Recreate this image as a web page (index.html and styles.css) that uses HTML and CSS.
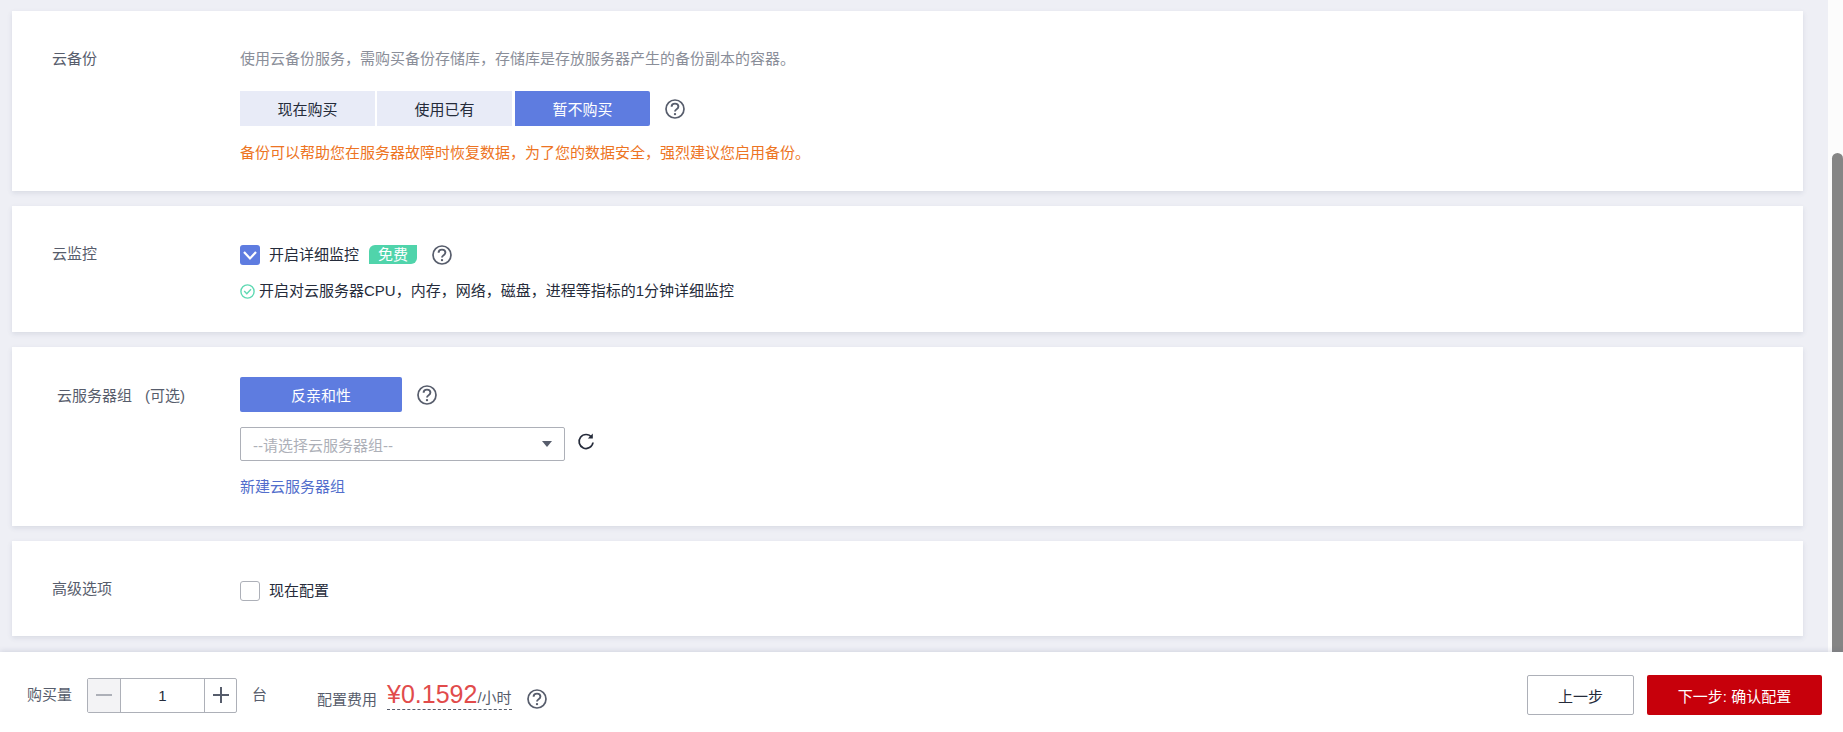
FILE: index.html
```html
<!DOCTYPE html>
<html lang="zh-CN">
<head>
  <meta charset="UTF-8">
  <title>云服务器配置</title>
  <link rel="stylesheet" href="styles.css">
</head>
<body>
  <svg class="defs" width="0" height="0">
    <symbol id="help" viewBox="0 0 20 20">
      <circle cx="10" cy="10" r="9" fill="none" stroke="currentColor" stroke-width="1.7"/>
      <path d="M6.6 7.8c0-2 1.5-3.2 3.4-3.2s3.4 1.2 3.4 3c0 1.3-.8 2-1.8 2.6-1 .6-1.6 1.1-1.6 2.4" fill="none" stroke="currentColor" stroke-width="1.9"/>
      <circle cx="10" cy="15.1" r="1.2" fill="currentColor"/>
    </symbol>
  </svg>

  <div class="viewport">
    <main class="content">
      <section class="card card-backup">
        <div class="label">云备份</div>
        <div class="body">
          <p class="desc">使用云备份服务，需购买备份存储库，存储库是存放服务器产生的备份副本的容器。</p>
          <div class="row tabs-row">
            <div class="tabs">
              <button class="tab">现在购买</button>
              <button class="tab">使用已有</button>
              <button class="tab active">暂不购买</button>
            </div>
            <svg class="help"><use href="#help"/></svg>
          </div>
          <p class="warn">备份可以帮助您在服务器故障时恢复数据，为了您的数据安全，强烈建议您启用备份。</p>
        </div>
      </section>

      <section class="card card-monitor">
        <div class="label">云监控</div>
        <div class="body">
          <div class="row">
            <span class="checkbox checked">
              <svg viewBox="0 0 20 20" width="20" height="20"><path d="M4 7l6 6.5L16 7" fill="none" stroke="#fff" stroke-width="2.2"/></svg>
            </span>
            <span class="check-text">开启详细监控</span>
            <span class="badge">免费</span>
            <svg class="help"><use href="#help"/></svg>
          </div>
          <p class="note">
            <svg class="ok" viewBox="0 0 15 15" width="15" height="15">
              <circle cx="7.5" cy="7.5" r="6.6" fill="none" stroke="#5fd9b3" stroke-width="1.4"/>
              <path d="M4.2 7l2.6 2.8L11 5.2" fill="none" stroke="#5fd9b3" stroke-width="1.4"/>
            </svg>
            开启对云服务器CPU，内存，网络，磁盘，进程等指标的1分钟详细监控
          </p>
        </div>
      </section>

      <section class="card card-group">
        <div class="label">云服务器组<span class="optional">(可选)</span></div>
        <div class="body">
          <div class="row">
            <button class="primary">反亲和性</button>
            <svg class="help"><use href="#help"/></svg>
          </div>
          <div class="row select-row">
            <div class="select">
              <span>--请选择云服务器组--</span>
              <i class="caret"></i>
            </div>
            <svg class="refresh" viewBox="0 0 18 18" width="18" height="18">
              <path d="M14.6 4.2A7 7 0 1 0 16 9.5" fill="none" stroke="#252b3a" stroke-width="1.7"/>
              <path d="M15.8 .6v5h-5z" fill="#252b3a"/>
            </svg>
          </div>
          <a class="link" href="#">新建云服务器组</a>
        </div>
      </section>

      <section class="card card-advanced">
        <div class="label">高级选项</div>
        <div class="body">
          <div class="row">
            <span class="checkbox"></span>
            <span class="check-text">现在配置</span>
          </div>
        </div>
      </section>
    </main>
    <div class="scrollbar"><div class="thumb"></div></div>
  </div>

  <footer class="footer">
    <span class="qty-label">购买量</span>
    <div class="stepper">
      <span class="step minus"><i></i></span>
      <span class="qty">1</span>
      <span class="step plus"><i></i><i class="v"></i></span>
    </div>
    <span class="unit">台</span>
    <span class="fee-label">配置费用</span>
    <span class="price"><b>¥0.1592</b><small>/小时</small></span>
    <svg class="help fee-help"><use href="#help"/></svg>
    <div class="actions">
      <button class="btn-prev">上一步</button>
      <button class="btn-next">下一步: 确认配置</button>
    </div>
  </footer>
</body>
</html>
```

FILE: styles.css
```css
* {
  box-sizing: border-box;
  font-family: "Liberation Sans", "Noto Sans CJK SC", sans-serif;
}

body {
  display: flex;
  flex-direction: column;
  height: 100vh;
  margin: 0;
  overflow: hidden;
  font-size: 15px;
  color: #252b3a;
  background: #fff;
}

p {
  margin: 0;
}

button {
  border: 0;
  padding: 0;
  font-size: 15px;
  cursor: pointer;
}

.defs {
  position: absolute;
}

.viewport {
  display: flex;
  flex: 1;
  min-height: 0;
}

.content {
  flex: 1;
  display: flex;
  flex-direction: column;
  gap: 15px;
  padding: 11px 25px 0 12px;
  background: #eeeff5;
}

.scrollbar {
  display: flex;
  justify-content: flex-end;
  width: 15px;
  padding-top: 153px;
  background: #fcfcfc;
}

.thumb {
  width: 11px;
  background: #858585;
  border-radius: 6px 6px 0 0;
}

.card {
  display: flex;
  padding-left: 40px;
  background: #fff;
  box-shadow: 0 2px 5px rgba(60, 70, 110, .12);
}

.label {
  width: 188px;
  line-height: 20px;
  color: #575d6c;
}

.row {
  display: flex;
  align-items: center;
}

.help {
  width: 20px;
  height: 20px;
  color: #575d6c;
}

.card-backup {
  height: 180px;
  padding-top: 38px;
}

.desc {
  line-height: 20px;
  color: #8a8e99;
}

.tabs-row {
  margin-top: 22px;
}

.tabs {
  display: flex;
  gap: 2px;
  margin-right: 15px;
}

.tab {
  width: 135px;
  height: 35px;
  background: #e8ebf7;
  color: #252b3a;
}

.tab.active {
  margin-left: 1px;
  background: #5e7ce0;
  color: #fff;
  border-radius: 0 2px 2px 0;
}

.warn {
  margin-top: 17px;
  line-height: 20px;
  color: #ed7423;
}

.card-monitor {
  height: 126px;
  padding-top: 38px;
}

.card-monitor .body {
  padding-top: 1px;
}

.checkbox {
  display: block;
  width: 20px;
  height: 20px;
  border: 1px solid #adb0b8;
  border-radius: 3px;
}

.checkbox.checked {
  border: 0;
  background: #5e7ce0;
}

.checkbox svg {
  display: block;
}

.check-text {
  margin-left: 9px;
  line-height: 20px;
}

.badge {
  width: 48px;
  height: 19px;
  margin: -2px 15px 0 10px;
  line-height: 19px;
  text-align: center;
  color: #fff;
  background: #50d4ab;
  border-radius: 6px 0 6px 0;
}

.note {
  display: flex;
  align-items: center;
  gap: 4px;
  margin-top: 16px;
  line-height: 20px;
}

.card-group {
  height: 179px;
  padding-top: 30px;
}

.card-group .label {
  margin-top: 9px;
  padding-left: 5px;
}

.optional {
  margin-left: 13px;
}

.primary {
  width: 162px;
  height: 35px;
  margin-right: 15px;
  background: #5e7ce0;
  color: #fff;
  border-radius: 2px;
}

.select-row {
  margin-top: 15px;
  align-items: flex-start;
}

.select {
  display: flex;
  align-items: center;
  justify-content: space-between;
  width: 325px;
  height: 34px;
  padding: 0 12px;
  color: #adb0b8;
  border: 1px solid #adb0b8;
  border-radius: 2px;
}

.caret {
  width: 0;
  height: 0;
  border: 5px solid transparent;
  border-top: 6px solid #575d6c;
  border-bottom: 0;
}

.refresh {
  margin: 6px 0 0 12px;
}

.link {
  display: block;
  margin-top: 16px;
  line-height: 20px;
  color: #526ecc;
  text-decoration: none;
}

.card-advanced {
  height: 95px;
  padding-top: 38px;
}

.card-advanced .body {
  padding-top: 2px;
}

.footer {
  display: flex;
  align-items: center;
  flex: none;
  height: 80px;
  padding: 2px 21px 0 27px;
  background: #fff;
  box-shadow: 0 -1px 5px rgba(60, 70, 110, .16);
  position: relative;
}

.qty-label {
  color: #575d6c;
}

.stepper {
  display: flex;
  width: 150px;
  height: 35px;
  margin: 4px 0 0 15px;
  border: 1px solid #adb0b8;
  border-radius: 2px;
}

.step {
  display: flex;
  align-items: center;
  justify-content: center;
  flex: none;
  position: relative;
  width: 33px;
}

.step i {
  display: block;
  width: 16px;
  height: 2px;
}

.minus {
  background: #f3f3f5;
  border-right: 1px solid #adb0b8;
}

.minus i {
  background: #adb0b8;
}

.plus {
  width: 32px;
  border-left: 1px solid #adb0b8;
}

.plus i {
  background: #575d6c;
}

.plus .v {
  position: absolute;
  width: 2px;
  height: 16px;
}

.qty {
  flex: 1;
  text-align: center;
  line-height: 33px;
}

.unit {
  margin-left: 15px;
  color: #575d6c;
}

.fee-label {
  margin: 10px 0 0 50px;
  color: #575d6c;
}

.price {
  margin: 6px 0 0 10px;
  border-bottom: 1px dashed #575d6c;
  line-height: 22px;
}

.price b {
  font-weight: 400;
  font-size: 25px;
  color: #e14b4b;
}

.price small {
  font-size: 15px;
  color: #575d6c;
}

.fee-help {
  margin: 11px 0 0 15px;
}

.actions {
  display: flex;
  gap: 13px;
  margin: 4px 0 0 auto;
}

.btn-prev {
  width: 107px;
  height: 40px;
  background: #fff;
  color: #252b3a;
  border: 1px solid #adb0b8;
  border-radius: 2px;
}

.btn-next {
  width: 175px;
  height: 40px;
  background: #c7000b;
  color: #fff;
  border-radius: 2px;
}
```
